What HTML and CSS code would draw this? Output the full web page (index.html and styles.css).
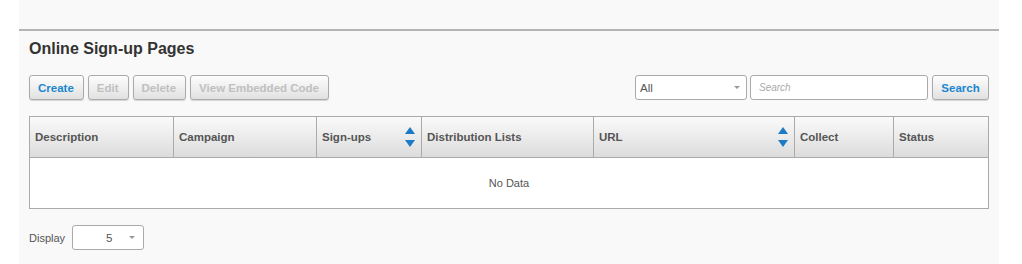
FILE: index.html
```html
<!DOCTYPE html>
<html lang="en">
  <head>
    <meta charset="UTF-8" />
    <title>Online Sign-up Pages</title>
    <link rel="stylesheet" href="styles.css">
  </head>
  <body>
    <div class="panel">
      <div class="topbar"></div>
      <div class="content">
        <h1 class="title">Online Sign-up Pages</h1>
        <div class="toolbar">
          <div class="actions">
            <button class="btn primary">Create</button>
            <button class="btn disabled">Edit</button>
            <button class="btn disabled">Delete</button>
            <button class="btn disabled">View Embedded Code</button>
          </div>
          <div class="filters">
            <div class="select filter-select">
              <span>All</span>
              <span class="caret"></span>
            </div>
            <div class="search-input">Search</div>
            <button class="btn primary">Search</button>
          </div>
        </div>
        <div class="grid">
          <div class="row head">
            <div class="cell c-desc">Description</div>
            <div class="cell c-camp">Campaign</div>
            <div class="cell c-sign sortable">Sign-ups
              <span class="sort"><i class="up"></i><i class="down"></i></span>
            </div>
            <div class="cell c-dist">Distribution Lists</div>
            <div class="cell c-url sortable">URL
              <span class="sort"><i class="up"></i><i class="down"></i></span>
            </div>
            <div class="cell c-coll">Collect</div>
            <div class="cell c-stat">Status</div>
          </div>
          <div class="empty">No Data</div>
        </div>
        <div class="pager">
          <span class="pager-label">Display</span>
          <div class="select page-select">
            <span class="val">5</span>
            <span class="caret"></span>
          </div>
        </div>
      </div>
    </div>
  </body>
</html>
```

FILE: styles.css
```css
* {
  margin: 0;
  padding: 0;
  box-sizing: border-box;
}
body {
  background-color: #fff;
  font-family: "Liberation Sans", Arial, sans-serif;
  color: #555;
}

.panel {
  margin-left: 19px;
  width: 980px;
  height: 264px;
  background-color: #f9f9f9;
}

.topbar {
  height: 31px;
  border-bottom: 2px solid #b4b4b4;
}

.content {
  padding: 0 10px;
}

.title {
  font-size: 16px;
  font-weight: bold;
  color: #333;
  margin-top: 8px;
  height: 20px;
  line-height: 20px;
}

.toolbar {
  display: flex;
  justify-content: space-between;
  margin-top: 16px;
  height: 25px;
}

.actions {
  display: flex;
  gap: 4px;
}

.filters {
  display: flex;
  gap: 3px;
}

.btn {
  height: 25px;
  padding: 0 9px 0 8px;
  font: bold 11.5px "Liberation Sans", Arial, sans-serif;
  border: 1px solid #aaa;
  border-radius: 3px;
  background: linear-gradient(#fdfdfd, #e1e1e1);
  box-shadow: 0 1px 1px rgba(0, 0, 0, 0.15);
}

.primary {
  color: #1b87cf;
}

.disabled {
  color: #c0c0c0;
}

.select {
  display: flex;
  align-items: center;
  justify-content: space-between;
  height: 25px;
  border: 1px solid #aaa;
  border-radius: 3px;
  background-color: #fff;
  font-size: 11.5px;
  color: #555;
  padding: 0 6px 0 4px;
}

.caret {
  width: 0;
  height: 0;
  border-left: 3px solid transparent;
  border-right: 3px solid transparent;
  border-top: 3px solid #999;
}

.filter-select {
  width: 112px;
}

.search-input {
  width: 178px;
  height: 25px;
  border: 1px solid #aaa;
  border-radius: 3px;
  background-color: #fff;
  font-size: 10px;
  font-style: italic;
  color: #aaa;
  line-height: 23px;
  padding-left: 8px;
}

.filters .btn {
  margin-left: 1px;
  width: 57px;
  padding: 0;
}

.grid {
  margin-top: 16px;
  width: 960px;
  border: 1px solid #aaa;
}

.row {
  display: flex;
}

.head {
  height: 41px;
  background: linear-gradient(#fafafa, #dcdcdc);
  border-bottom: 1px solid #aaa;
}

.cell {
  display: flex;
  align-items: center;
  padding-left: 5px;
  font-size: 11.5px;
  font-weight: bold;
  color: #555;
  border-right: 1px solid #aaa;
}

.cell:last-child {
  border-right: none;
}

.c-desc { width: 144px; }
.c-camp { width: 143px; }
.c-sign { width: 105px; }
.c-dist { width: 172px; }
.c-url { width: 201px; }
.c-coll { width: 99px; }
.c-stat { flex: 1; }

.sortable {
  justify-content: space-between;
  padding-right: 6px;
}

.sort {
  display: flex;
  flex-direction: column;
  gap: 6px;
}

.sort i {
  width: 0;
  height: 0;
  border-left: 5px solid transparent;
  border-right: 5px solid transparent;
}

.sort .up {
  border-bottom: 7px solid #1b7bc6;
}

.sort .down {
  border-top: 7px solid #1b7bc6;
}

.empty {
  height: 50px;
  background-color: #fff;
  text-align: center;
  line-height: 50px;
  font-size: 11px;
  color: #555;
}

.pager {
  display: flex;
  align-items: center;
  gap: 7px;
  margin-top: 16px;
}

.pager-label {
  font-size: 11px;
  color: #555;
}

.page-select {
  width: 72px;
  height: 25px;
  padding: 0 8px 0 33px;
}
```
